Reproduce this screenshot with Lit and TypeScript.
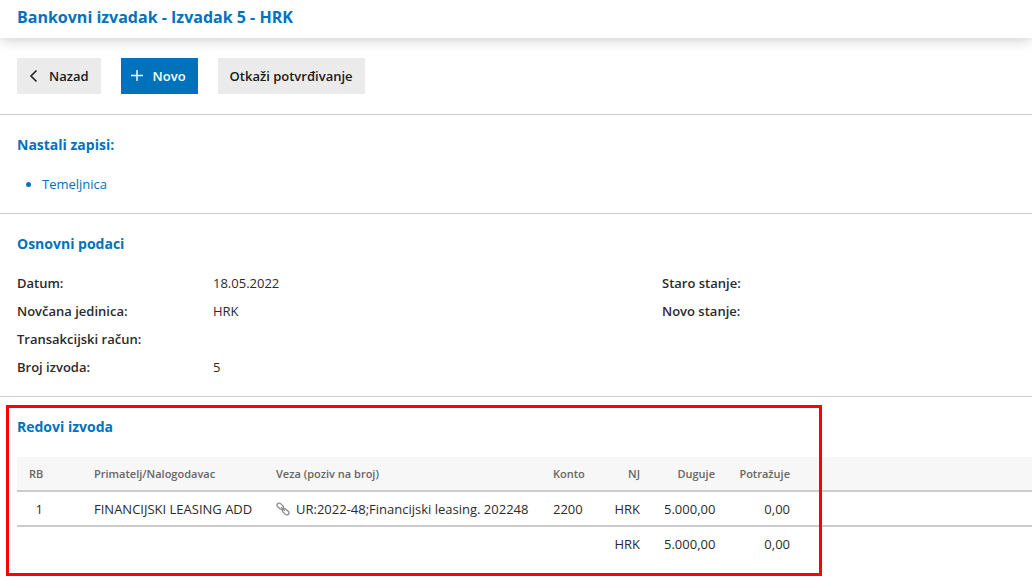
import { LitElement, html, css, svg } from "lit";
import { customElement } from "lit/decorators.js";

interface Field {
  label: string;
  value: string;
}

const basics: Field[] = [
  { label: "Datum:", value: "18.05.2022" },
  { label: "Novčana jedinica:", value: "HRK" },
  { label: "Transakcijski račun:", value: "" },
  { label: "Broj izvoda:", value: "5" },
];

const balances: Field[] = [
  { label: "Staro stanje:", value: "" },
  { label: "Novo stanje:", value: "" },
];

const linkIcon = svg`
  <svg class="chain" viewBox="0 0 14 14" width="14" height="14" aria-hidden="true">
    <g fill="none" stroke="#8c8c8c" stroke-width="1.3">
      <rect x="-3.6" y="-2.1" width="7.2" height="4.2" rx="2.1" transform="translate(4.3 4.2) rotate(42)" />
      <rect x="-3.6" y="-2.1" width="7.2" height="4.2" rx="2.1" transform="translate(9.7 9.8) rotate(42)" />
      <path d="M5.2 5.2 L8.8 8.8" />
    </g>
  </svg>`;

@customElement("app-root")
export class AppRoot extends LitElement {
  static styles = css`
    :host {
      display: block;
      min-height: 100vh;
      overflow-x: hidden;
      background: #fff;
      color: #2b2b2b;
      font-family: "Open Sans", "Noto Sans", sans-serif;
      font-size: 13px;
      line-height: 20px;
    }
    * {
      box-sizing: border-box;
    }
    h1,
    h2,
    ul,
    dl,
    dd {
      margin: 0;
      padding: 0;
    }
    .top {
      padding: 5px 17px 9px;
      box-shadow: 0 2px 14px rgba(0, 0, 0, 0.2);
    }
    .title {
      color: #0072bc;
      font-size: 16px;
      line-height: 24px;
      font-weight: 700;
    }
    .actions {
      display: flex;
      flex-wrap: wrap;
      gap: 20px;
      padding: 20px 17px;
    }
    .btn {
      display: flex;
      align-items: center;
      gap: 8px;
      height: 36px;
      padding: 0 12px;
      border: 0;
      background: #ebebeb;
      color: #1a1a1a;
      font: inherit;
      font-weight: 600;
      cursor: pointer;
    }
    .btn.primary {
      padding: 0 12px 0 8px;
      background: #0072bc;
      color: #fff;
    }
    .btn.back {
      padding: 0 12px 0 8px;
    }
    .section {
      position: relative;
      border-top: 1px solid #ccc;
      padding: 20px 17px 19px;
    }
    .heading {
      color: #0072bc;
      font-size: 14px;
      line-height: 20px;
      font-weight: 700;
    }
    .records {
      margin-top: 19px;
      padding-left: 25px;
      color: #0072bc;
    }
    .records a {
      color: inherit;
      text-decoration: none;
    }
    .details {
      display: grid;
      grid-template-columns: 645fr 353fr;
      margin-top: 15px;
    }
    .field {
      display: grid;
      grid-template-columns: 196px 1fr;
      line-height: 28px;
    }
    .field dt {
      font-weight: 600;
    }
    .details-section {
      padding-bottom: 15px;
    }
    .rows {
      padding-right: 0;
    }
    .rows table {
      width: 100%;
      margin-top: 20px;
      border-collapse: separate;
      border-spacing: 0;
      table-layout: fixed;
    }
    th,
    td {
      height: 35px;
      padding: 0 12px;
      border-bottom: 2px solid #ccc;
      text-align: left;
      white-space: nowrap;
      font-weight: 400;
    }
    tfoot td {
      border-bottom-color: transparent;
    }
    th {
      background: #f7f7f7;
      color: #666;
      font-size: 11px;
      font-weight: 600;
    }
    .num {
      text-align: right;
    }
    td.index {
      padding-right: 39px;
      text-align: right;
    }
    .c-index {
      width: 65px;
    }
    .c-payee {
      width: 182px;
    }
    .c-ref {
      width: 277px;
    }
    .c-account {
      width: 56px;
    }
    .c-currency {
      width: 55px;
    }
    .c-amount {
      width: 75px;
    }
    .ref {
      display: flex;
      align-items: center;
      gap: 6px;
    }
    .chain {
      flex: none;
    }
    .marker {
      position: absolute;
      top: 8px;
      left: 6px;
      bottom: 5px;
      width: 816px;
      border: 3px solid #f00;
      pointer-events: none;
    }
  `;

  private fields(items: Field[]) {
    return html`<dl>
      ${items.map(
        (f) => html`<div class="field"><dt>${f.label}</dt><dd>${f.value}</dd></div>`
      )}
    </dl>`;
  }

  render() {
    return html`
      <header class="top"><h1 class="title">Bankovni izvadak - Izvadak 5 - HRK</h1></header>
      <main>
        <div class="actions">
          <button class="btn back" type="button">
            <svg width="16" height="16" viewBox="0 0 16 16" aria-hidden="true">
              <path d="M11.5 2.5 L6 8 L11.5 13.5" fill="none" stroke="#222" stroke-width="1.6" />
            </svg>
            Nazad
          </button>
          <button class="btn primary" type="button">
            <svg width="16" height="16" viewBox="0 0 16 16" aria-hidden="true">
              <path d="M2 7.5 H14 M8 2 V13" fill="none" stroke="#fff" stroke-width="1.4" />
            </svg>
            Novo
          </button>
          <button class="btn" type="button">Otkaži potvrđivanje</button>
        </div>

        <section class="section">
          <h2 class="heading">Nastali zapisi:</h2>
          <ul class="records">
            <li><a href="#temeljnica">Temeljnica</a></li>
          </ul>
        </section>

        <section class="section details-section">
          <h2 class="heading">Osnovni podaci</h2>
          <div class="details">${this.fields(basics)} ${this.fields(balances)}</div>
        </section>

        <section class="section rows">
          <h2 class="heading">Redovi izvoda</h2>
          <table>
            <colgroup>
              <col class="c-index" />
              <col class="c-payee" />
              <col class="c-ref" />
              <col class="c-account" />
              <col class="c-currency" />
              <col class="c-amount" />
              <col class="c-amount" />
              <col />
            </colgroup>
            <thead>
              <tr>
                <th>RB</th>
                <th>Primatelj/Nalogodavac</th>
                <th>Veza (poziv na broj)</th>
                <th>Konto</th>
                <th class="num">NJ</th>
                <th class="num">Duguje</th>
                <th class="num">Potražuje</th>
                <th></th>
              </tr>
            </thead>
            <tbody>
              <tr>
                <td class="index">1</td>
                <td>FINANCIJSKI LEASING ADD</td>
                <td><span class="ref">${linkIcon}UR:2022-48;Financijski leasing. 202248</span></td>
                <td>2200</td>
                <td class="num">HRK</td>
                <td class="num">5.000,00</td>
                <td class="num">0,00</td>
                <td></td>
              </tr>
            </tbody>
            <tfoot>
              <tr>
                <td colspan="4"></td>
                <td class="num">HRK</td>
                <td class="num">5.000,00</td>
                <td class="num">0,00</td>
                <td></td>
              </tr>
            </tfoot>
          </table>
          <div class="marker"></div>
        </section>
      </main>
    `;
  }
}
